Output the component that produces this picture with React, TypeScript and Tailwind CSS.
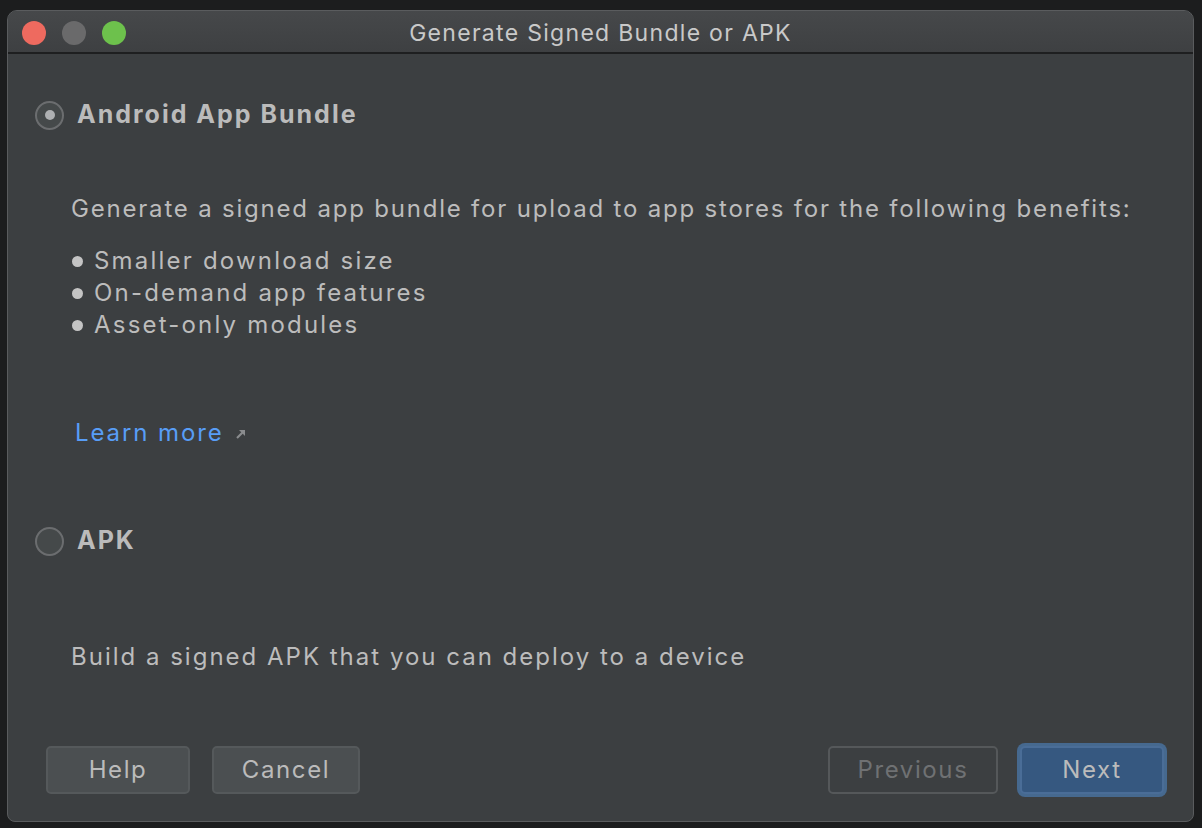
import type { FC, ReactNode } from "react";

const font = { fontFamily: "Inter, 'Noto Sans', sans-serif" };

const Radio: FC<{ checked?: boolean; label: string }> = ({ checked, label }) => (
  <div className="flex items-center h-[30px] pl-[27px]">
    <span className="flex items-center justify-center w-[29px] h-[29px] rounded-full border-2 border-[#6b6d6f] bg-[#45494a]">
      {checked && <span className="w-[10px] h-[10px] rounded-full bg-[#aeb0b2]" />}
    </span>
    <span className="ml-[13px] text-[25px] font-bold tracking-[2px] text-[#bbbbbb]">{label}</span>
  </div>
);

const Bullet: FC<{ children: ReactNode }> = ({ children }) => (
  <div className="flex items-center h-[32px]">
    <span className="w-[11px] h-[11px] rounded-full bg-[#c4c4c4] mr-[11px]" />
    <span>{children}</span>
  </div>
);

const Button: FC<{ label: string; className?: string }> = ({ label, className }) => (
  <button
    className={
      "h-[48px] rounded-[5px] border-2 text-[24px] tracking-[1.6px] flex items-center justify-center " +
      (className ?? "")
    }
  >
    {label}
  </button>
);

const App: FC = () => {
  return (
    <div className="w-[1202px] h-[828px] bg-[#1c1d1e] pt-[10px] pl-[7px] overflow-hidden" style={font}>
      <div className="w-[1187px] h-[812px] rounded-t-[10px] rounded-b-[8px] bg-[#3c3f41] border border-[#5a5c5e] flex flex-col overflow-hidden">
        {/* title bar */}
        <div className="h-[43px] shrink-0 flex items-center relative pt-[2px] bg-gradient-to-b from-[#46484a] to-[#3e4042] border-b-2 border-[#1e1f20]">
          <div className="flex items-center gap-[16px] pl-[14px]">
            <span className="w-[24px] h-[24px] rounded-full bg-[#ee6a5f]" />
            <span className="w-[24px] h-[24px] rounded-full bg-[#6a6a6b]" />
            <span className="w-[24px] h-[24px] rounded-full bg-[#6dc14c]" />
          </div>
          <div className="absolute inset-0 pt-[3px] flex items-center justify-center text-[23px] tracking-[1.3px] text-[#c9c9c9]">
            Generate Signed Bundle or APK
          </div>
        </div>

        <div className="flex flex-col text-[24px] tracking-[1.9px] text-[#bcbcbc]">
          <div className="mt-[46px]">
            <Radio checked label="Android App Bundle" />
          </div>
          <div className="pl-[63px] mt-[63px] h-[32px] flex items-center tracking-[1.8px]">
            Generate a signed app bundle for upload to app stores for the following benefits:
          </div>
          <div className="pl-[64px] mt-[20px] flex flex-col tracking-[2.2px]">
            <Bullet>Smaller download size</Bullet>
            <Bullet>On-demand app features</Bullet>
            <Bullet>Asset-only modules</Bullet>
          </div>
          <div className="pl-[67px] mt-[76px] h-[32px] flex items-center text-[#589df6]">
            Learn more
            <svg width="14" height="14" viewBox="0 0 14 14" className="ml-[10px] mt-[2px]">
              <path d="M3 11 L10 4" stroke="#8a8c8e" strokeWidth="2.2" />
              <path d="M5 3 H11 V9 Z" fill="#8a8c8e" />
            </svg>
          </div>
          <div className="mt-[77px]">
            <Radio label="APK" />
          </div>
          <div className="pl-[63px] mt-[85px] h-[32px] flex items-center tracking-[2px]">
            Build a signed APK that you can deploy to a device
          </div>
        </div>

        <div className="mt-[70px] flex items-center pl-[38px] pr-[26px]">
          <Button label="Help" className="w-[144px] bg-[#4b4f51] border-[#55595b] text-[#bbbbbb]" />
          <Button label="Cancel" className="ml-[22px] w-[148px] bg-[#4b4f51] border-[#55595b] text-[#bbbbbb]" />
          <div className="flex-1" />
          <Button label="Previous" className="w-[170px] bg-transparent border-[#55585a] text-[#6f7173]" />
          <div className="ml-[19px] rounded-[8px] p-[3px] bg-[#46698f]">
            <Button label="Next" className="w-[144px] bg-[#365880] border-[#4a6d97] text-[#bbbbbb]" />
          </div>
        </div>
      </div>
    </div>
  );
};

export default App;
